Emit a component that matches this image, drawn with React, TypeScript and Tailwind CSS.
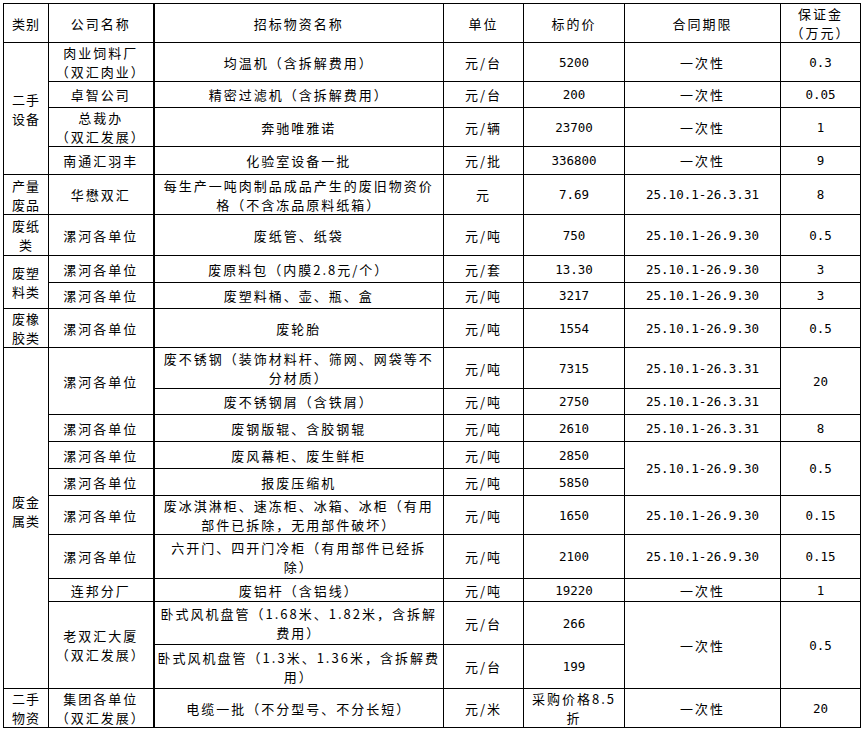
import React from "react";

type C = { t: React.ReactNode; rs?: number; k?: "cat" | "co" | "num" | "txt"; x?: string };

const br = (a: string, b: string) => (
  <>
    {a}
    <br />
    {b}
  </>
);

const rows: { h: string; cells: C[] }[] = [
  {
    h: "h-[39px]",
    cells: [
      { t: br("二手", "设备"), rs: 4, k: "cat" },
      { t: br("肉业饲料厂", "（双汇肉业）"), k: "co" },
      { t: "均温机（含拆解费用）" },
      { t: "元/台" },
      { t: "5200", k: "num" },
      { t: "一次性" },
      { t: "0.3", k: "num" },
    ],
  },
  {
    h: "h-[26px]",
    cells: [
      { t: "卓智公司", k: "co" },
      { t: "精密过滤机（含拆解费用）" },
      { t: "元/台" },
      { t: "200", k: "num" },
      { t: "一次性" },
      { t: "0.05", k: "num" },
    ],
  },
  {
    h: "h-[39px]",
    cells: [
      { t: br("总裁办", "（双汇发展）"), k: "co" },
      { t: "奔驰唯雅诺" },
      { t: "元/辆" },
      { t: "23700", k: "num" },
      { t: "一次性" },
      { t: "1", k: "num" },
    ],
  },
  {
    h: "h-[28px]",
    cells: [
      { t: "南通汇羽丰", k: "co" },
      { t: "化验室设备一批" },
      { t: "元/批" },
      { t: "336800", k: "num" },
      { t: "一次性" },
      { t: "9", k: "num" },
    ],
  },
  {
    h: "h-[40px]",
    cells: [
      { t: br("产量", "废品"), k: "cat" },
      { t: "华懋双汇", k: "co" },
      { t: br("每生产一吨肉制品成品产生的废旧物资价", "格（不含冻品原料纸箱）") },
      { t: "元" },
      { t: "7.69", k: "num" },
      { t: "25.10.1-26.3.31", k: "num" },
      { t: "8", k: "num" },
    ],
  },
  {
    h: "h-[41px]",
    cells: [
      { t: br("废纸", "类"), k: "cat" },
      { t: "漯河各单位", k: "co" },
      { t: "废纸管、纸袋" },
      { t: "元/吨" },
      { t: "750", k: "num" },
      { t: "25.10.1-26.9.30", k: "num" },
      { t: "0.5", k: "num" },
    ],
  },
  {
    h: "h-[27px]",
    cells: [
      { t: br("废塑", "料类"), rs: 2, k: "cat" },
      { t: "漯河各单位", k: "co" },
      { t: "废原料包（内膜2.8元/个）" },
      { t: "元/套" },
      { t: "13.30", k: "num" },
      { t: "25.10.1-26.9.30", k: "num" },
      { t: "3", k: "num" },
    ],
  },
  {
    h: "h-[26px]",
    cells: [
      { t: "漯河各单位", k: "co" },
      { t: "废塑料桶、壶、瓶、盒" },
      { t: "元/吨" },
      { t: "3217", k: "num" },
      { t: "25.10.1-26.9.30", k: "num" },
      { t: "3", k: "num" },
    ],
  },
  {
    h: "h-[39px]",
    cells: [
      { t: br("废橡", "胶类"), k: "cat" },
      { t: "漯河各单位", k: "co" },
      { t: "废轮胎" },
      { t: "元/吨" },
      { t: "1554", k: "num" },
      { t: "25.10.1-26.9.30", k: "num" },
      { t: "0.5", k: "num" },
    ],
  },
  {
    h: "h-[41px]",
    cells: [
      { t: br("废金", "属类"), rs: 10, k: "cat", x: "pb-[14px]" },
      { t: "漯河各单位", rs: 2, k: "co" },
      { t: br("废不锈钢（装饰材料杆、筛网、网袋等不", "分材质）") },
      { t: "元/吨" },
      { t: "7315", k: "num" },
      { t: "25.10.1-26.3.31", k: "num" },
      { t: "20", rs: 2, k: "num" },
    ],
  },
  {
    h: "h-[26px]",
    cells: [
      { t: "废不锈钢屑（含铁屑）" },
      { t: "元/吨" },
      { t: "2750", k: "num" },
      { t: "25.10.1-26.3.31", k: "num" },
    ],
  },
  {
    h: "h-[27px]",
    cells: [
      { t: "漯河各单位", k: "co" },
      { t: "废钢版辊、含胶钢辊" },
      { t: "元/吨" },
      { t: "2610", k: "num" },
      { t: "25.10.1-26.3.31", k: "num" },
      { t: "8", k: "num" },
    ],
  },
  {
    h: "h-[27px]",
    cells: [
      { t: "漯河各单位", k: "co" },
      { t: "废风幕柜、废生鲜柜" },
      { t: "元/吨" },
      { t: "2850", k: "num" },
      { t: "25.10.1-26.9.30", rs: 2, k: "num" },
      { t: "0.5", rs: 2, k: "num" },
    ],
  },
  {
    h: "h-[27px]",
    cells: [
      { t: "漯河各单位", k: "co" },
      { t: "报废压缩机" },
      { t: "元/吨" },
      { t: "5850", k: "num" },
    ],
  },
  {
    h: "h-[39px]",
    cells: [
      { t: "漯河各单位", k: "co" },
      { t: br("废冰淇淋柜、速冻柜、冰箱、冰柜（有用", "部件已拆除，无用部件破坏）") },
      { t: "元/吨" },
      { t: "1650", k: "num" },
      { t: "25.10.1-26.9.30", k: "num" },
      { t: "0.15", k: "num" },
    ],
  },
  {
    h: "h-[44px]",
    cells: [
      { t: "漯河各单位", k: "co" },
      { t: br("六开门、四开门冷柜（有用部件已经拆", "除）") },
      { t: "元/吨" },
      { t: "2100", k: "num" },
      { t: "25.10.1-26.9.30", k: "num" },
      { t: "0.15", k: "num" },
    ],
  },
  {
    h: "h-[23px]",
    cells: [
      { t: "连邦分厂", k: "co" },
      { t: "废铝杆（含铝线）" },
      { t: "元/吨" },
      { t: "19220", k: "num" },
      { t: "一次性" },
      { t: "1", k: "num" },
    ],
  },
  {
    h: "h-[43px]",
    cells: [
      { t: br("老双汇大厦", "（双汇发展）"), rs: 2, k: "co" },
      { t: br("卧式风机盘管（1.68米、1.82米，含拆解", "费用）") },
      { t: "元/台" },
      { t: "266", k: "num" },
      { t: "一次性", rs: 2 },
      { t: "0.5", rs: 2, k: "num" },
    ],
  },
  {
    h: "h-[44px]",
    cells: [
      { t: br("卧式风机盘管（1.3米、1.36米，含拆解费", "用）") },
      { t: "元/台" },
      { t: "199", k: "num" },
    ],
  },
  {
    h: "h-[39px]",
    cells: [
      { t: br("二手", "物资"), k: "cat" },
      { t: br("集团各单位", "（双汇发展）"), k: "co" },
      { t: "电缆一批（不分型号、不分长短）" },
      { t: "元/米" },
      { t: br("采购价格8.5", "折") },
      { t: "一次性" },
      { t: "20", k: "num" },
    ],
  },
];

const base =
  "border border-black p-0 text-center align-middle leading-[19px] text-black";

function cls(k?: C["k"]) {
  if (k === "cat") return base + " tracking-[1px]";
  if (k === "co") return base + " tracking-[2px] border-r-2";
  if (k === "num")
    return base + " tracking-[0px] font-['DejaVu_Sans_Mono','Noto_Sans_CJK_SC',monospace] text-[12.5px]";
  return base + " tracking-[2px]";
}

export default function App() {
  return (
    <div className="bg-white w-[862px] h-[731px] pl-[3px] pt-[3px] font-['Noto_Sans_CJK_SC',sans-serif] text-[13px]">
      <table className="border-collapse table-fixed w-[857px]">
        <colgroup>
          <col className="w-[45px]" />
          <col className="w-[105px]" />
          <col className="w-[290px]" />
          <col className="w-[80px]" />
          <col className="w-[101px]" />
          <col className="w-[156px]" />
          <col className="w-[80px]" />
        </colgroup>
        <tbody>
          <tr className="h-[38px]">
            <td className={cls("cat")}>类别</td>
            <td className={cls("co")}>公司名称</td>
            <td className={cls()}>招标物资名称</td>
            <td className={cls()}>单位</td>
            <td className={cls()}>标的价</td>
            <td className={cls()}>合同期限</td>
            <td className={cls()}>
              保证金
              <br />
              （万元）
            </td>
          </tr>
          {rows.map((r, i) => (
            <tr key={i} className={r.h}>
              {r.cells.map((c, j) => (
                <td key={j} rowSpan={c.rs} className={cls(c.k) + (c.x ? " " + c.x : "")}>
                  {c.t}
                </td>
              ))}
            </tr>
          ))}
        </tbody>
      </table>
    </div>
  );
}
